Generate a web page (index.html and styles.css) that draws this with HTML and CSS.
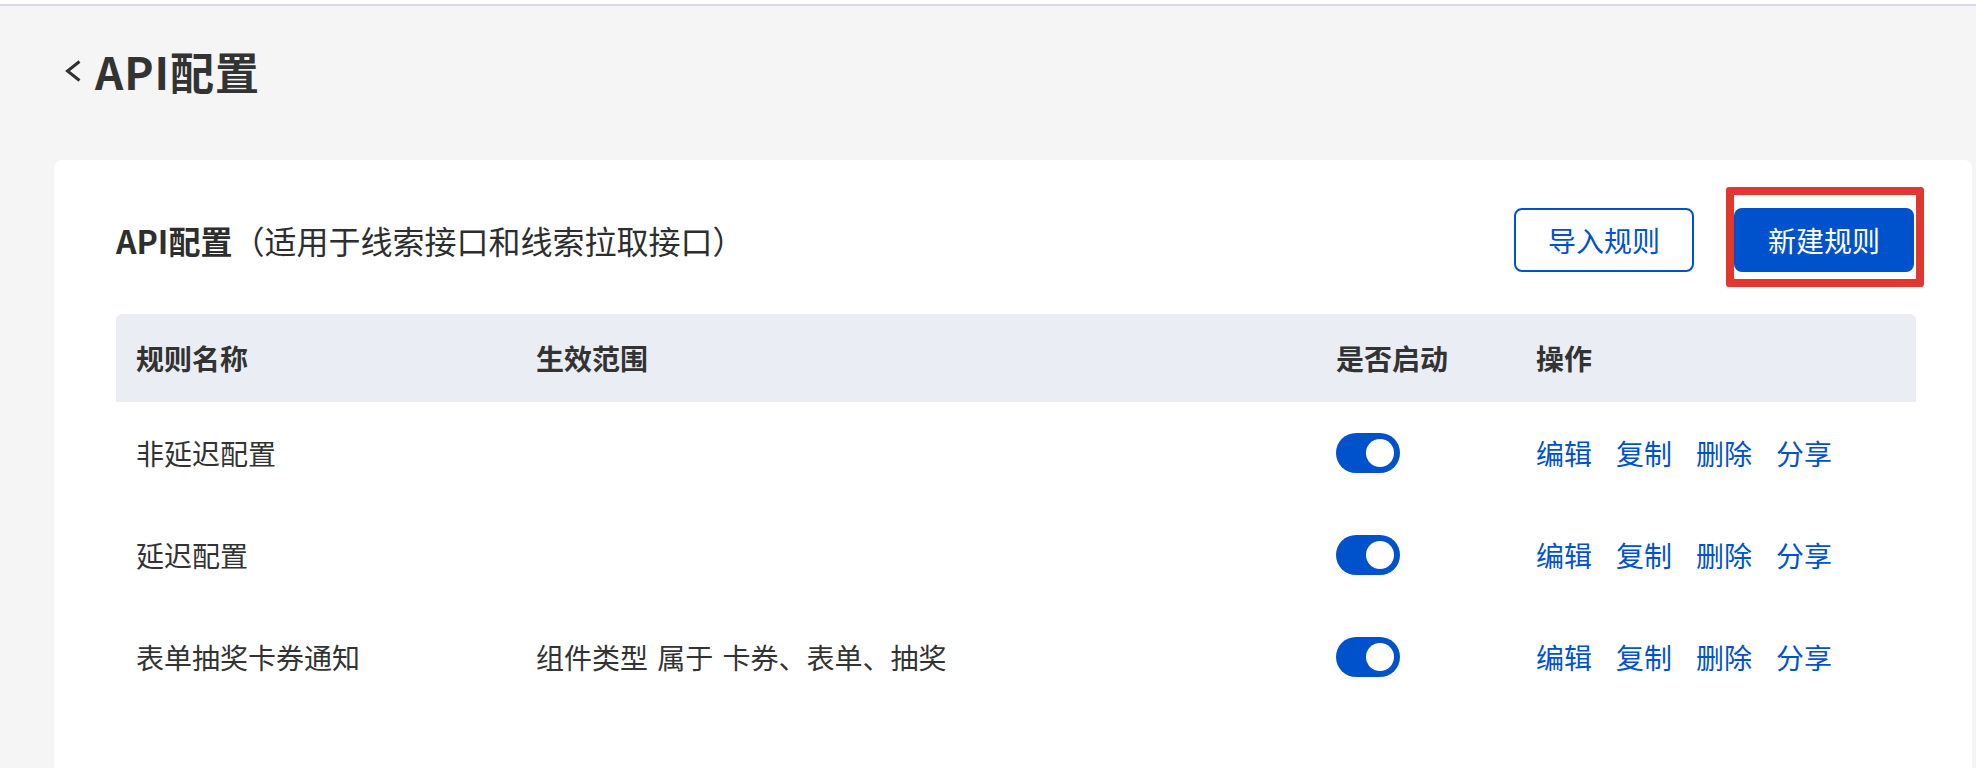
FILE: index.html
```html
<!DOCTYPE html>
<html lang="zh-CN">

<head>
    <meta charset="UTF-8">
    <meta name="viewport" content="width=device-width, initial-scale=1.0">
    <title>API配置</title>
    <link rel="stylesheet" href="styles.css">
</head>

<body>
    <div class="topbar"></div>
    <div class="page">
        <div class="page-header">
            <svg class="back" width="18" height="24" viewBox="0 0 18 24">
                <polyline points="15.5,2.5 3.5,12 15.5,21.5" fill="none" stroke="#333" stroke-width="3" />
            </svg>
            <h1 class="page-title">API配置</h1>
        </div>

        <div class="card">
            <div class="toolbar">
                <h2 class="section-title">API配置<span class="section-note">（适用于线索接口和线索拉取接口）</span></h2>
                <div class="btn-group">
                    <button class="btn btn-outline">导入规则</button>
                    <div class="btn-wrap">
                        <button class="btn btn-primary">新建规则</button>
                        <span class="highlight"></span>
                    </div>
                </div>
            </div>

            <table class="rules">
                <colgroup>
                    <col class="col-name">
                    <col class="col-scope">
                    <col class="col-switch">
                    <col class="col-ops">
                </colgroup>
                <thead>
                    <tr>
                        <th>规则名称</th>
                        <th>生效范围</th>
                        <th>是否启动</th>
                        <th>操作</th>
                    </tr>
                </thead>
                <tbody>
                    <tr>
                        <td>非延迟配置</td>
                        <td></td>
                        <td><span class="switch on"><span class="knob"></span></span></td>
                        <td class="ops"><a>编辑</a><a>复制</a><a>删除</a><a>分享</a></td>
                    </tr>
                    <tr>
                        <td>延迟配置</td>
                        <td></td>
                        <td><span class="switch on"><span class="knob"></span></span></td>
                        <td class="ops"><a>编辑</a><a>复制</a><a>删除</a><a>分享</a></td>
                    </tr>
                    <tr>
                        <td>表单抽奖卡券通知</td>
                        <td class="scope">组件类型 属于 卡券、表单、抽奖</td>
                        <td><span class="switch on"><span class="knob"></span></span></td>
                        <td class="ops"><a>编辑</a><a>复制</a><a>删除</a><a>分享</a></td>
                    </tr>
                </tbody>
            </table>
        </div>
    </div>
</body>

</html>
```

FILE: styles.css
```css
body {
    margin: 0;
    background: #f5f5f5;
    font-family: "Noto Sans CJK SC", "Noto Sans", sans-serif;
    color: #333;
    overflow: hidden;
}

.topbar {
    height: 4px;
    background: #ffffff;
    border-bottom: 2px solid #d5dae6;
}

.page {
    padding: 0 4px 0 54px;
}

.page-header {
    display: flex;
    align-items: center;
    gap: 13px;
    height: 60px;
    margin: 35px 0 59px 10px;
}

.back {
    display: block;
}

.page-title {
    margin: 0;
    font-size: 44px;
    font-weight: 700;
    line-height: 60px;
    letter-spacing: 1px;
    color: #333;
}

.card {
    background: #ffffff;
    border-radius: 8px 8px 0 0;
    padding: 48px 56px 80px 62px;
}

.toolbar {
    display: flex;
    justify-content: space-between;
    align-items: center;
    height: 64px;
}

.section-title {
    margin: 0;
    font-size: 32px;
    font-weight: 700;
    line-height: 44px;
    color: #2e2e2e;
}

.section-note {
    font-weight: 400;
}

.btn-group {
    display: flex;
    align-items: center;
    gap: 40px;
    margin-right: 2px;
}

.btn {
    width: 180px;
    height: 64px;
    border-radius: 8px;
    font-family: inherit;
    font-size: 28px;
    padding: 0;
    cursor: pointer;
}

.btn-outline {
    background: #ffffff;
    border: 2px solid #0052cc;
    color: #0052cc;
}

.btn-primary {
    background: #0052cc;
    border: none;
    color: #ffffff;
}

.btn-wrap {
    position: relative;
    display: flex;
}

.highlight {
    position: absolute;
    top: -21px;
    left: -8px;
    right: -10px;
    bottom: -15px;
    border: 8px solid #e0382f;
    border-radius: 3px;
    pointer-events: none;
}

.rules {
    width: 1800px;
    margin-top: 42px;
    border-collapse: separate;
    border-spacing: 0;
    table-layout: fixed;
    font-size: 28px;
}

.col-name {
    width: 400px;
}

.col-scope {
    width: 800px;
}

.col-switch {
    width: 200px;
}

.col-ops {
    width: 400px;
}

.rules th {
    height: 88px;
    padding: 0 0 0 20px;
    background: #ebedf5;
    text-align: left;
    font-weight: 700;
    color: #333;
}

.rules th:first-child {
    border-top-left-radius: 6px;
}

.rules th:last-child {
    border-top-right-radius: 6px;
}

.rules td {
    height: 102px;
    padding: 0 0 0 20px;
    vertical-align: middle;
    color: #333;
}

.scope {
    word-spacing: 3px;
}

.switch {
    display: flex;
    align-items: center;
    width: 64px;
    height: 40px;
    border-radius: 20px;
    background: #0052cc;
    box-sizing: border-box;
    padding: 0 6px;
}

.switch.on {
    justify-content: flex-end;
}

.knob {
    width: 28px;
    height: 28px;
    border-radius: 50%;
    background: #ffffff;
}

.ops {
    white-space: nowrap;
}

.ops a {
    color: #0052cc;
    margin-right: 24px;
    cursor: pointer;
}
```
